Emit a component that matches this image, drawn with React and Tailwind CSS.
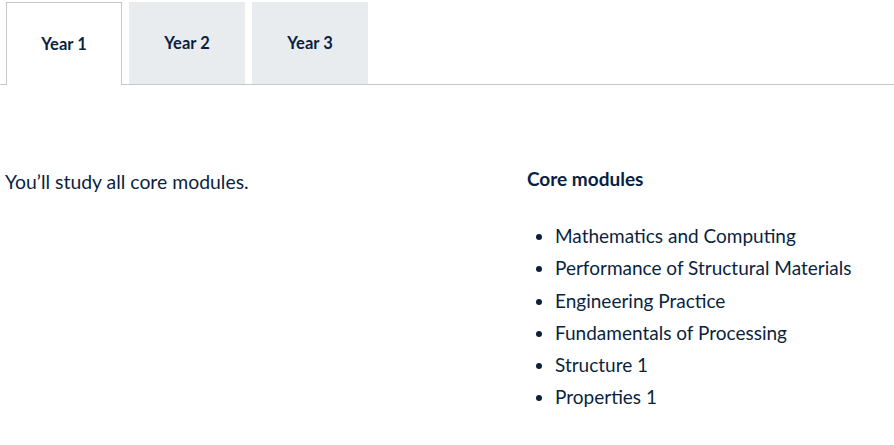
export default function App() {
  const tabs = ['Year 1', 'Year 2', 'Year 3']
  const active = 0
  const modules = [
    'Mathematics and Computing',
    'Performance of Structural Materials',
    'Engineering Practice',
    'Fundamentals of Processing',
    'Structure 1',
    'Properties 1',
  ]

  return (
    <div className="min-h-screen bg-white text-[#0b1f3f]" style={{ fontFamily: 'Lato, "Noto Sans", sans-serif' }}>
      {/* Tabs */}
      <div className="flex gap-[7px] border-b border-[#c4c9ce] pl-[6px] pt-[2px]">
        {tabs.map((tab, i) => (
          <button
            key={tab}
            className={
              i === active
                ? '-mb-px h-[83px] w-[116px] border border-b-0 border-[#c4c9ce] bg-white text-[16.5px] font-bold'
                : 'h-[82px] w-[116px] bg-[#e9ecee] text-[16.5px] font-bold'
            }
          >
            {tab}
          </button>
        ))}
      </div>

      {/* Content */}
      <div className="flex pt-[84px]">
        <div className="w-[527px] pl-[5px]">
          <p className="text-[19.4px] leading-[26px]">You’ll study all core modules.</p>
        </div>
        <div>
          <h3 className="-mt-[3px] text-[19px] font-bold leading-[26px]">Core modules</h3>
          <ul className="mt-[28px] list-disc pl-[28px] text-[19px] leading-[32.3px]">
            {modules.map((m) => (
              <li key={m}>{m}</li>
            ))}
          </ul>
        </div>
      </div>
    </div>
  )
}
